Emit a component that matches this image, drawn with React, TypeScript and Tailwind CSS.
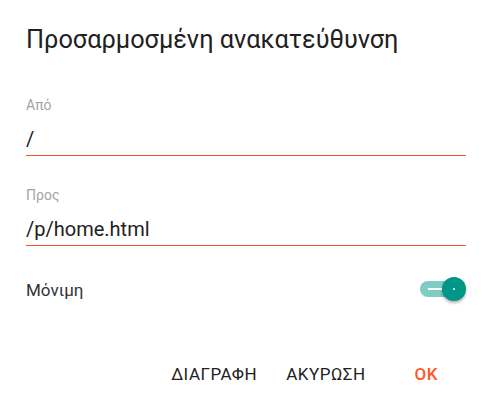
import { useState } from 'react';

export default function App() {
  const [from, setFrom] = useState('/');
  const [to, setTo] = useState('/p/home.html');
  const [permanent, setPermanent] = useState(true);

  return (
    <div className="w-[487px] h-[404px] bg-white pt-[24px] pl-[26px] pr-[21px] font-['Roboto',sans-serif] text-[#212121]">
      <h1 className="text-[25.3px] leading-[32px] font-normal">Προσαρμοσμένη ανακατεύθυνση</h1>

      {/* From field */}
      <div className="mt-[39px]">
        <label className="block text-[14px] leading-[20px] text-[#a3a3a3]">Από</label>
        <input
          className="mt-[10px] block w-full h-[31px] pb-[3px] text-[20px] leading-[28px] outline-none border-b border-[#f4511e] bg-transparent"
          value={from}
          onChange={(e) => setFrom(e.target.value)}
        />
      </div>

      {/* To field */}
      <div className="mt-[29px]">
        <label className="block text-[14px] leading-[20px] text-[#a3a3a3]">Προς</label>
        <input
          className="mt-[10px] block w-full h-[31px] pb-[3px] text-[20px] leading-[28px] outline-none border-b border-[#f4511e] bg-transparent"
          value={to}
          onChange={(e) => setTo(e.target.value)}
        />
      </div>

      {/* Permanent toggle */}
      <div className="mt-[23px] h-[40px] flex items-center justify-between">
        <span className="pt-[1px] text-[17px] leading-[24px] text-[#333]">Μόνιμη</span>
        <button
          type="button"
          className="relative w-[46px] h-[24px]"
          onClick={() => setPermanent(!permanent)}
        >
          <span className="absolute left-0 top-[4px] w-[38px] h-[16px] rounded-full bg-[#80cbc4]">
            <span className="absolute left-[8px] top-[7px] w-[14px] h-[2px] bg-white" />
          </span>
          <span className="absolute right-0 top-0 w-[24px] h-[24px] rounded-full bg-[#009688] shadow-[0_2px_3px_rgba(0,0,0,0.3)] flex items-center justify-center">
            <span className="w-[2px] h-[2px] bg-white rounded-full" />
          </span>
        </button>
      </div>

      {/* Actions */}
      <div className="mt-[47px] flex justify-end items-center pr-[28px] text-[17px] leading-[36px] font-normal tracking-[0.5px] uppercase">
        <button type="button" className="text-[#222]">ΔΙΑΓΡΑΦΗ</button>
        <button type="button" className="ml-[29px] text-[#222]">ΑΚΥΡΩΣΗ</button>
        <button type="button" className="ml-[49px] font-medium text-[#ff5722]">OK</button>
      </div>
    </div>
  );
}
